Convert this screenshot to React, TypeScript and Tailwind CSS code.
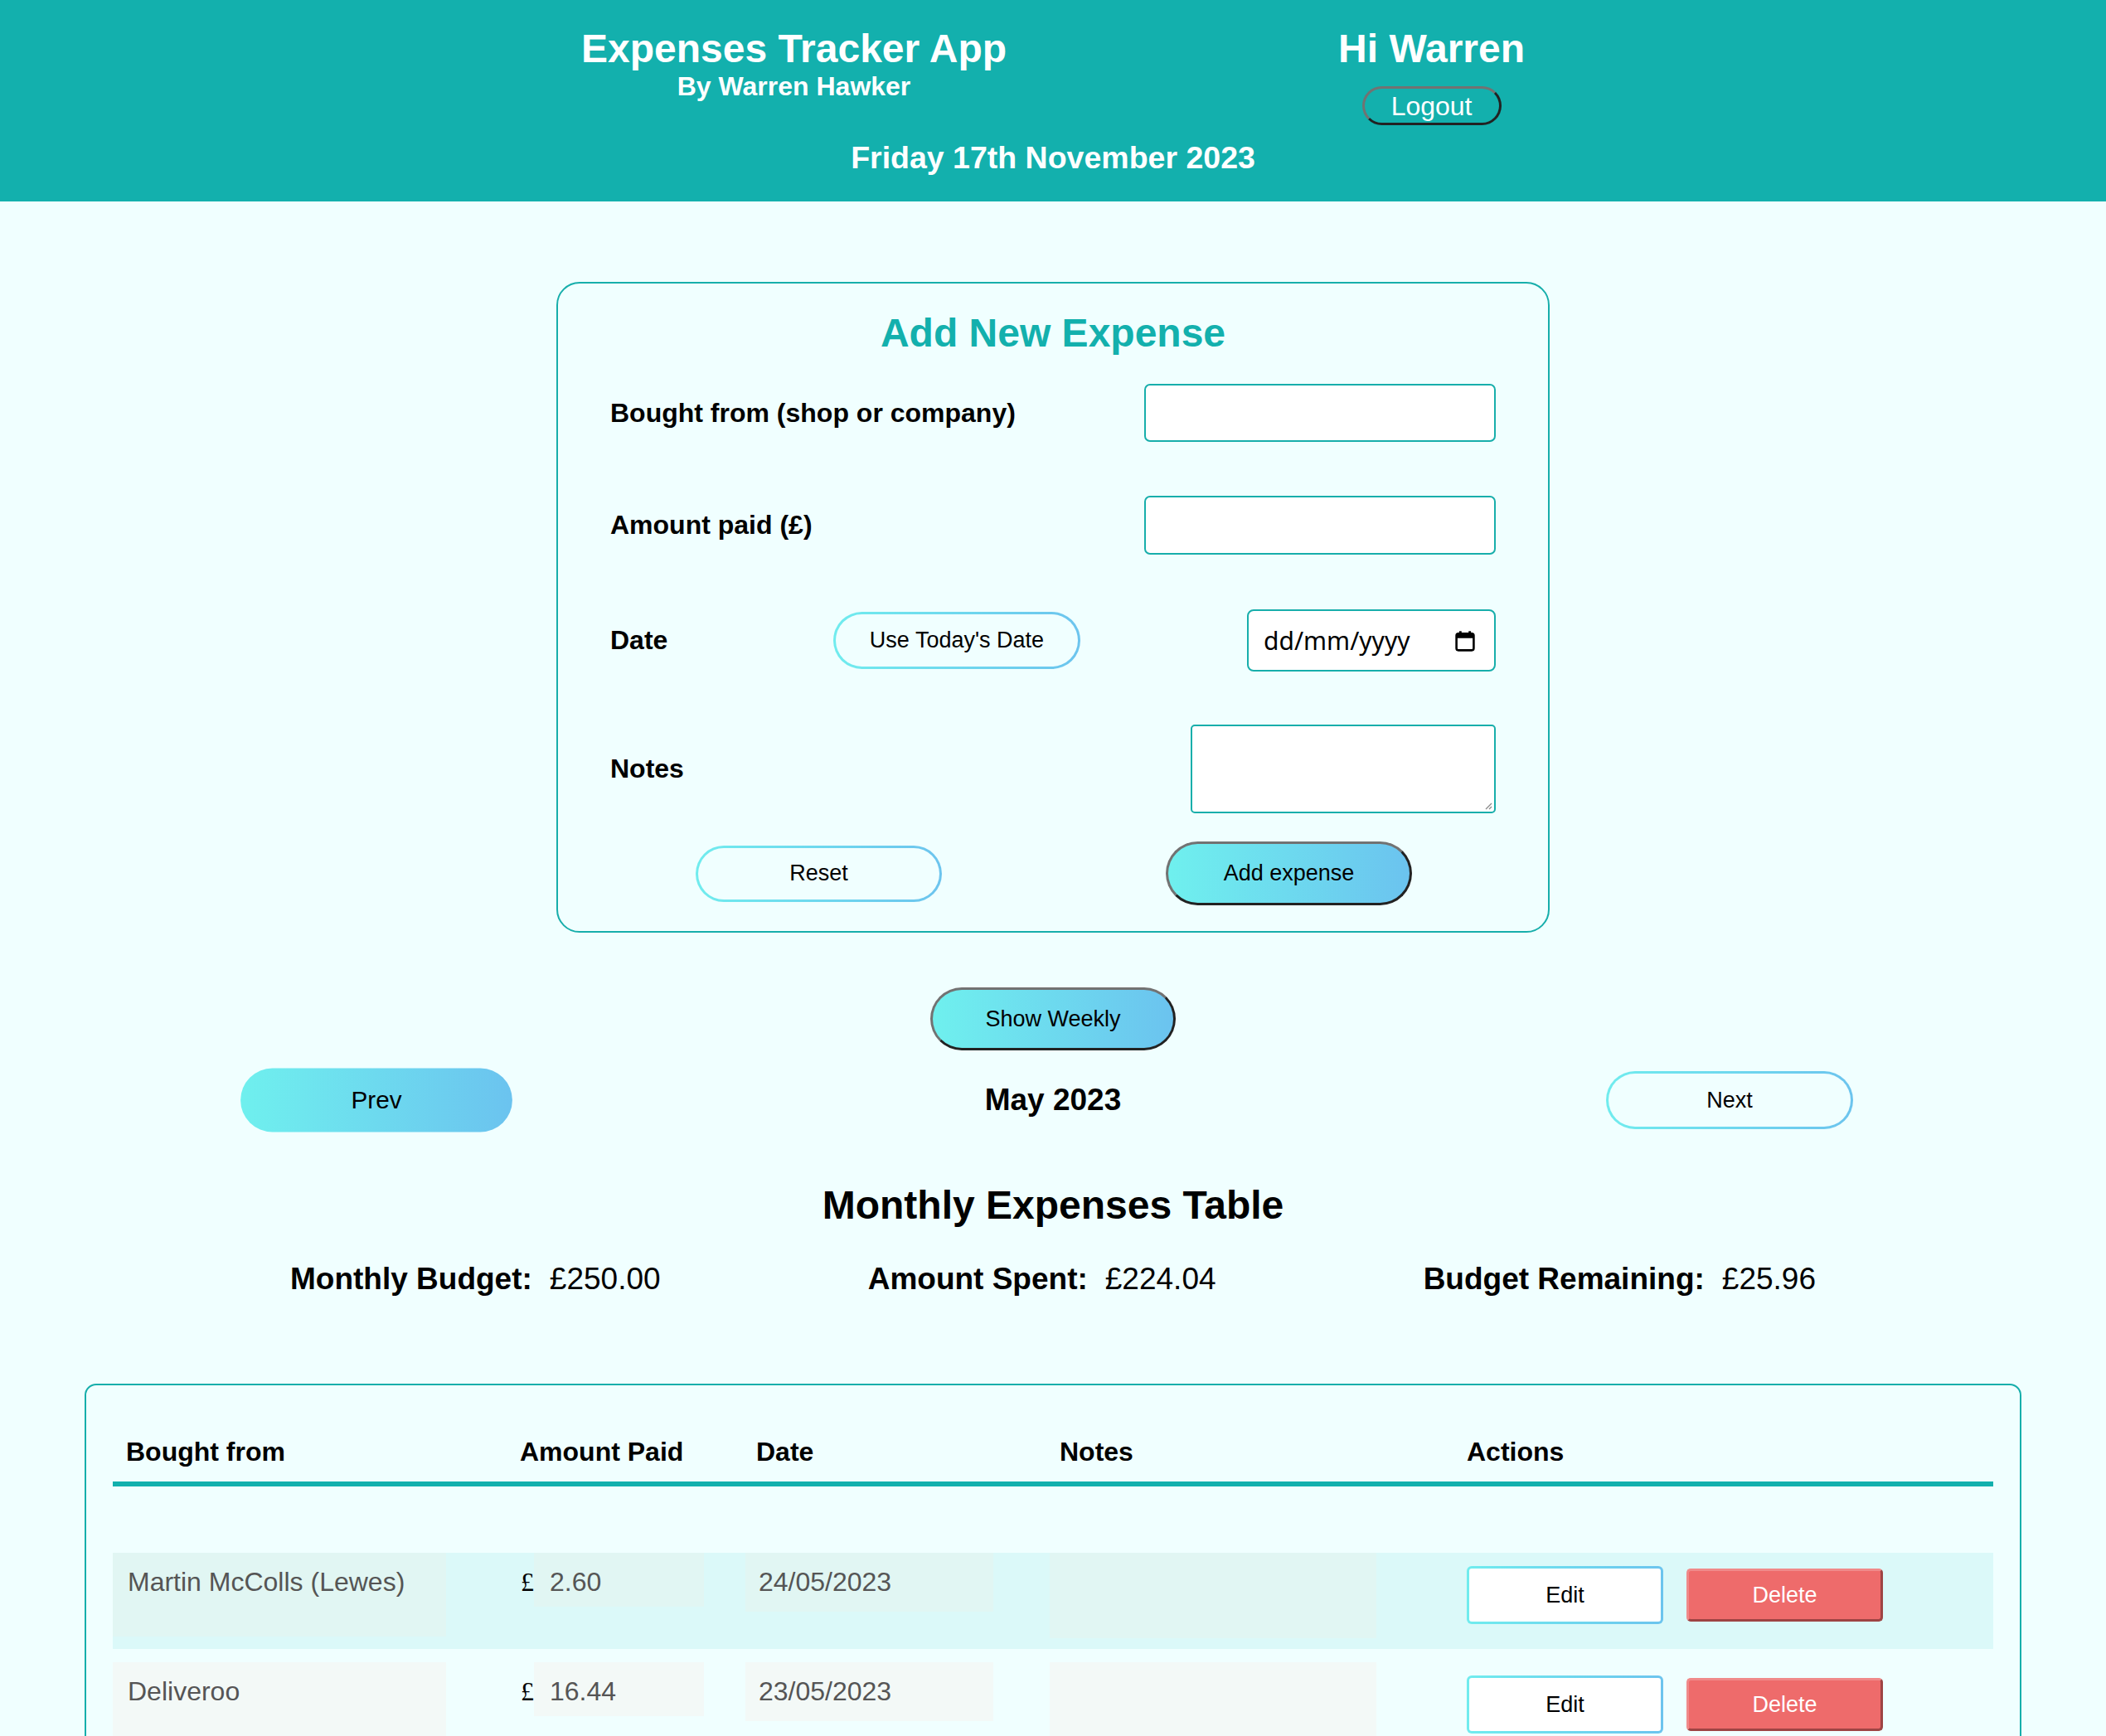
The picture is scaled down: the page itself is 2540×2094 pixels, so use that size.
import React from "react";

const gradFill = "bg-[linear-gradient(90deg,#6ff0ee,#6bc3ef)]";
const gradBorder =
  "border-[3px] border-transparent [background:linear-gradient(#f0ffff,#f0ffff)_padding-box,linear-gradient(90deg,#70ecee,#6cc4ee)_border-box]";
const gradBorderWhite =
  "border-[3px] border-transparent [background:linear-gradient(#ffffff,#ffffff)_padding-box,linear-gradient(90deg,#70ecee,#6cc4ee)_border-box]";
const outset =
  "border-[3px] border-t-[#727272] border-l-[#727272] border-r-[#222222] border-b-[#222222]";

function CalendarIcon() {
  return (
    <svg width="26" height="26" viewBox="0 0 16 16" aria-hidden="true">
      <rect x="1.6" y="2.6" width="12.8" height="12.4" rx="1.4" fill="none" stroke="#000" strokeWidth="1.6" />
      <rect x="1.6" y="2.6" width="12.8" height="3.4" fill="#000" />
      <rect x="3.6" y="0.8" width="1.8" height="3" fill="#000" />
      <rect x="10.6" y="0.8" width="1.8" height="3" fill="#000" />
    </svg>
  );
}

type Row = { shop: string; amount: string; date: string; highlight: boolean };

const rows: Row[] = [
  { shop: "Martin McColls (Lewes)", amount: "2.60", date: "24/05/2023", highlight: true },
  { shop: "Deliveroo", amount: "16.44", date: "23/05/2023", highlight: false },
];

function TableRow({ r }: { r: Row }) {
  const cell = r.highlight ? "bg-[#e1f6f3]" : "bg-[#f3f9f7]";
  return (
    <div
      className={`grid h-[116px] grid-cols-[475px_285px_366px_491px_1fr] ${
        r.highlight ? "bg-[#dbf9f9]" : "bg-transparent"
      }`}
    >
      <div className={`h-[101px] w-[402px] pl-[18px] pt-[17px] text-[32px] leading-[37px] text-[#555555] ${cell}`}>
        {r.shop}
      </div>
      <div className="flex items-start">
        <span className="w-[33px] pl-[17px] pt-[17px] font-['Liberation_Serif',serif] text-[32px] leading-[37px] text-black">
          £
        </span>
        <div className={`h-[65px] w-[205px] pl-[19px] pt-[17px] text-[32px] leading-[37px] text-[#555555] ${cell}`}>
          {r.amount}
        </div>
      </div>
      <div className="pl-[3px]">
        <div className={`h-[71px] w-[299px] pl-[16px] pt-[17px] text-[32px] leading-[37px] text-[#555555] ${cell}`}>
          {r.date}
        </div>
      </div>
      <div className="pl-[4px]">
        <div className={`h-[103px] w-[394px] ${cell}`} />
      </div>
      <div className="pl-[16px] pt-[16px]">
        <div className="flex h-[70px] items-center gap-[28px]">
          <button className={`h-[70px] w-[237px] rounded-[6px] text-[27px] text-black ${gradBorderWhite}`}>
            Edit
          </button>
          <button className="h-[64px] w-[237px] rounded-[5px] border-[3px] border-t-[#f08a8a] border-l-[#f08a8a] border-r-[#9e4444] border-b-[#9e4444] bg-[#ee6b6b] text-[27px] text-white">
            Delete
          </button>
        </div>
      </div>
    </div>
  );
}

export default function App() {
  return (
    <div className="h-[2094px] overflow-hidden bg-[#f0ffff] font-['Liberation_Sans',Arial,sans-serif] text-black">
      <header className="flex h-[243px] flex-col items-center bg-[#13b0ad] text-white">
        <div className="flex justify-center gap-[400px] pt-[32px]">
          <div className="flex flex-col items-center">
            <h1 className="text-[48px] font-bold leading-[54px]">Expenses Tracker App</h1>
            <p className="text-[32px] font-bold leading-[36px]">By Warren Hawker</p>
          </div>
          <div className="flex flex-col items-center">
            <h2 className="text-[48px] font-bold leading-[54px]">Hi Warren</h2>
            <button
              className={`mt-[18px] flex h-[47px] w-[168px] items-center justify-center rounded-full text-[32px] leading-none text-white ${outset}`}
            >
              Logout
            </button>
          </div>
        </div>
        <p className="mt-[18px] text-[37.5px] font-bold leading-[42px]">Friday 17th November 2023</p>
      </header>

      <main className="flex flex-col items-center">
        <section className="mt-[97px] w-[1198px] rounded-[28px] border-2 border-[#17aeab] px-[63px] pb-[31px] pt-[33px]">
          <h2 className="text-center text-[48px] font-bold leading-[54px] text-[#13b0ad]">Add New Expense</h2>

          <div className="mt-[34px] flex h-[70px] items-center justify-between">
            <label className="text-[32px] font-bold leading-[37px]">Bought from (shop or company)</label>
            <div className="h-[70px] w-[424px] rounded-[7px] border-2 border-[#17aeab] bg-white" />
          </div>

          <div className="mt-[65px] flex h-[71px] items-center justify-between">
            <label className="text-[32px] font-bold leading-[37px]">Amount paid (£)</label>
            <div className="h-[71px] w-[424px] rounded-[7px] border-2 border-[#17aeab] bg-white" />
          </div>

          <div className="mt-[66px] flex h-[75px] items-center">
            <label className="w-[269px] text-[32px] font-bold leading-[37px]">Date</label>
            <button className={`h-[69px] w-[298px] rounded-full text-[27px] text-black ${gradBorder}`}>
              Use Today&apos;s Date
            </button>
            <div className="ml-auto flex h-[75px] w-[300px] items-center justify-between rounded-[8px] border-2 border-[#17aeab] bg-white pl-[18px] pr-[22px]">
              <span className="font-['Noto_Sans',sans-serif] text-[30px] leading-none">dd/mm/yyyy</span>
              <CalendarIcon />
            </div>
          </div>

          <div className="mt-[64px] flex h-[107px] items-center justify-between">
            <label className="text-[32px] font-bold leading-[37px]">Notes</label>
            <div className="relative h-[107px] w-[368px] rounded-[5px] border-2 border-[#17aeab] bg-white">
              <svg className="absolute bottom-[2px] right-[2px]" width="10" height="10" viewBox="0 0 10 10">
                <line x1="9" y1="2" x2="2" y2="9" stroke="#8a8a8a" strokeWidth="1.2" />
                <line x1="9" y1="6" x2="6" y2="9" stroke="#8a8a8a" strokeWidth="1.2" />
              </svg>
            </div>
          </div>

          <div className="mt-[34px] flex h-[77px] items-center gap-[270px] pl-[103px]">
            <button className={`h-[68px] w-[297px] rounded-full text-[27px] text-black ${gradBorder}`}>Reset</button>
            <button className={`h-[77px] w-[297px] rounded-full text-[27px] text-black ${gradFill} ${outset}`}>
              Add expense
            </button>
          </div>
        </section>

        <button className={`mt-[66px] h-[76px] w-[296px] rounded-full text-[27px] text-black ${gradFill} ${outset}`}>
          Show Weekly
        </button>

        <div className="mt-[25px] flex h-[70px] w-full items-center justify-between px-[305px]">
          <button className={`h-[70px] w-[298px] scale-110 rounded-full text-[27px] text-black ${gradFill}`}>Prev</button>
          <span className="text-[37px] font-bold leading-[42px]">May 2023</span>
          <button className={`h-[70px] w-[298px] rounded-full text-[27px] text-black ${gradBorder}`}>Next</button>
        </div>

        <h2 className="mt-[65px] text-[48px] font-bold leading-[54px]">Monthly Expenses Table</h2>

        <div className="mt-[41px] flex w-full justify-between px-[350px] text-[37px] leading-[42px]">
          <div>
            <span className="font-bold">Monthly Budget:</span>
            <span className="ml-[21px]">£250.00</span>
          </div>
          <div>
            <span className="font-bold">Amount Spent:</span>
            <span className="ml-[21px]">£224.04</span>
          </div>
          <div>
            <span className="font-bold">Budget Remaining:</span>
            <span className="ml-[21px]">£25.96</span>
          </div>
        </div>

        <div className="mt-[105px] w-[2336px] self-center rounded-t-[14px] border-2 border-[#17aeab] px-[32px] pb-[40px] pt-[62px]">
          <div className="grid grid-cols-[475px_285px_366px_491px_1fr] border-b-[6px] border-[#13b0ad] pb-[17px] text-[32px] font-bold leading-[37px]">
            <div className="pl-[16px]">Bought from</div>
            <div className="pl-[16px]">Amount Paid</div>
            <div className="pl-[16px]">Date</div>
            <div className="pl-[16px]">Notes</div>
            <div className="pl-[16px]">Actions</div>
          </div>
          <div className="mt-[80px] flex flex-col gap-[16px]">
            {rows.map((r) => (
              <TableRow key={r.shop} r={r} />
            ))}
          </div>
        </div>
      </main>
    </div>
  );
}
